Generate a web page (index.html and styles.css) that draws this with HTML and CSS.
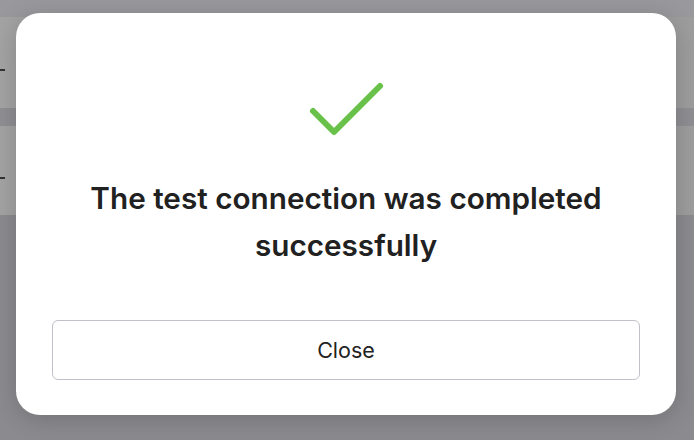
FILE: index.html
```html
<!DOCTYPE html>
<html>
<head>
<meta charset="utf-8">
<link rel="stylesheet" href="styles.css">
</head>
<body>
<div class="page">
  <div class="topbar"></div>
  <div class="row"><span class="dash"></span></div>
  <div class="sep"></div>
  <div class="row"><span class="dash"></span></div>
  <div class="rest"></div>
</div>
<div class="modal">
  <svg class="check" width="80" height="60" viewBox="0 0 80 60">
    <polyline points="6,33 27,54 73,8" fill="none" stroke="#68c24a" stroke-width="6" stroke-linecap="round" stroke-linejoin="round"/>
  </svg>
  <h1 class="title">The test connection was completed successfully</h1>
  <button class="close">Close</button>
</div>
</body>
</html>
```
FILE: styles.css
```css
html, body {
  margin: 0;
  padding: 0;
  width: 694px;
  height: 440px;
  overflow: hidden;
}
body {
  background: #8b8b8f;
  font-family: Inter, "Noto Sans", sans-serif;
}
.page {
  display: flex;
  flex-direction: column;
  height: 440px;
}
.topbar {
  height: 17px;
  background: #99999d;
}
.row {
  height: 91px;
  background: linear-gradient(90deg, #a3a3a3, #9d9d9d);
  display: flex;
  align-items: center;
}
.row + .sep + .row { height: 89px; }
.dash {
  display: block;
  width: 5px;
  height: 2px;
  background: #333;
  margin-top: 14px;
}
.sep {
  height: 18px;
  background: #8f8f93;
}
.rest {
  flex: 1;
  background: #8b8b8f;
}
.modal {
  position: absolute;
  left: 16px;
  top: 13px;
  width: 660px;
  height: 402px;
  box-sizing: border-box;
  background: #fff;
  border-radius: 24px;
  box-shadow: 0 4px 24px rgba(0,0,0,0.18);
  display: flex;
  flex-direction: column;
  align-items: center;
  padding: 65px 36px 0;
}
.check {
  display: block;
  margin-left: 2px;
}
.title {
  margin: 37px 0 0;
  font-size: 29.7px;
  font-weight: 600;
  line-height: 47px;
  color: #212121;
  text-align: center;
  max-width: 560px;
}
.close {
  margin-top: 51px;
  width: 100%;
  height: 60px;
  box-sizing: border-box;
  background: #fff;
  border: 1px solid #c2c1c9;
  border-radius: 6px;
  font-family: Inter, "Noto Sans", sans-serif;
  font-size: 21.5px;
  color: #222;
}
```
